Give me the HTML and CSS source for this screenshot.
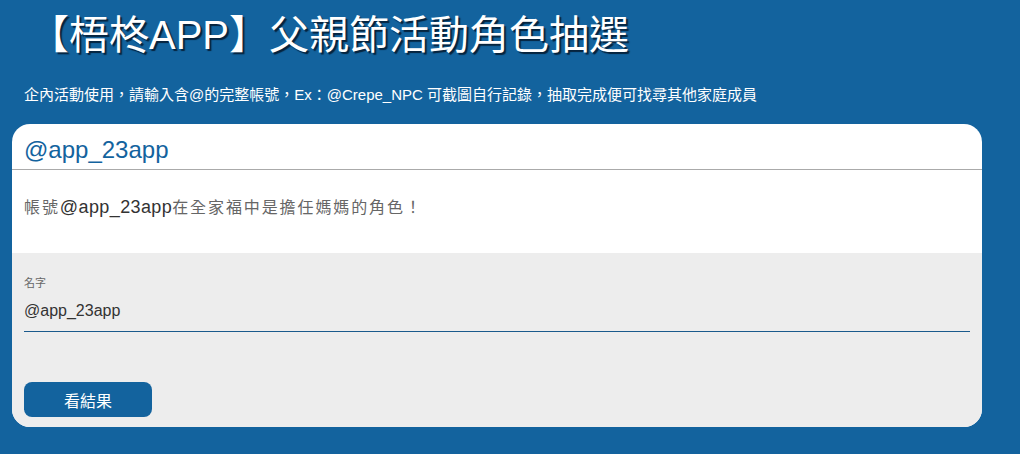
FILE: index.html
```html
<!DOCTYPE html>
<html lang="zh-Hant">
<head>
    <meta charset="UTF-8">
    <meta name="viewport" content="width=device-width, initial-scale=1.0">
    <title>梧柊APP 父親節活動角色抽選</title>
    <link rel="stylesheet" href="styles.css">
</head>
<body>
    <div class="main">
        <h1 class="title">【梧柊APP】父親節活動角色抽選</h1>
        <p class="intro">企內活動使用，請輸入含@的完整帳號，Ex：@Crepe_NPC 可截圖自行記錄，抽取完成便可找尋其他家庭成員</p>

        <div class="card">
            <div class="card-head">@app_23app</div>
            <div class="card-body">帳號<span class="acc">@app_23app</span>在全家福中是擔任媽媽的角色！</div>
            <form class="card-form" onsubmit="return false;">
                <label for="uname" class="field-label">名字</label>
                <input type="text" id="uname" class="field" value="@app_23app">
                <button type="submit" class="btn">看結果</button>
            </form>
        </div>
    </div>
</body>
</html>
```

FILE: styles.css
```css
body{
    margin: 0;
    background-color: #13639e;
    font-family: "Liberation Sans", "Noto Sans CJK TC", sans-serif;
}
.main{
    padding-left: 12px;
}
.title{
    margin: 0;
    padding: 15px 0 0 17px;
    font-size: 40px;
    line-height: 40px;
    font-weight: 400;
    color: #fff;
    text-shadow: 2px 2px 1px #06233d;
}
.intro{
    margin: 30px 0 19px 12px;
    font-size: 15px;
    line-height: 20px;
    color: #fff;
}
.card{
    width: 970px;
    background-color: #fff;
    border-radius: 18px;
    overflow: hidden;
}
.card-head{
    padding: 12px 12px 5px;
    font-size: 24px;
    line-height: 28px;
    color: #13639e;
    border-bottom: 1px solid #aaa;
}
.card-body{
    height: 22px;
    padding: 27px 12px 34px;
    font-size: 16px;
    line-height: 22px;
    letter-spacing: 1.9px;
    color: #666;
}
.acc{
    font-size: 18px;
    line-height: 1;
    letter-spacing: 0.4px;
    color: #333;
}
.card-form{
    background-color: #ededed;
    padding: 23px 12px 10px;
}
.field-label{
    display: block;
    font-size: 11px;
    line-height: 14px;
    color: #666;
}
.field{
    display: block;
    box-sizing: border-box;
    width: 100%;
    height: 41px;
    margin: 1px 0 50px;
    padding: 0;
    border: 0;
    border-bottom: 1px solid #1a5a8c;
    background: transparent;
    font-family: "Liberation Sans", "Noto Sans CJK TC", sans-serif;
    font-size: 16px;
    color: #333;
    outline: none;
}
.btn{
    display: block;
    width: 128px;
    height: 35px;
    border: 0;
    border-radius: 8px;
    background-color: #13639e;
    color: #fff;
    font-family: "Liberation Sans", "Noto Sans CJK TC", sans-serif;
    font-size: 16px;
    cursor: pointer;
}
```
